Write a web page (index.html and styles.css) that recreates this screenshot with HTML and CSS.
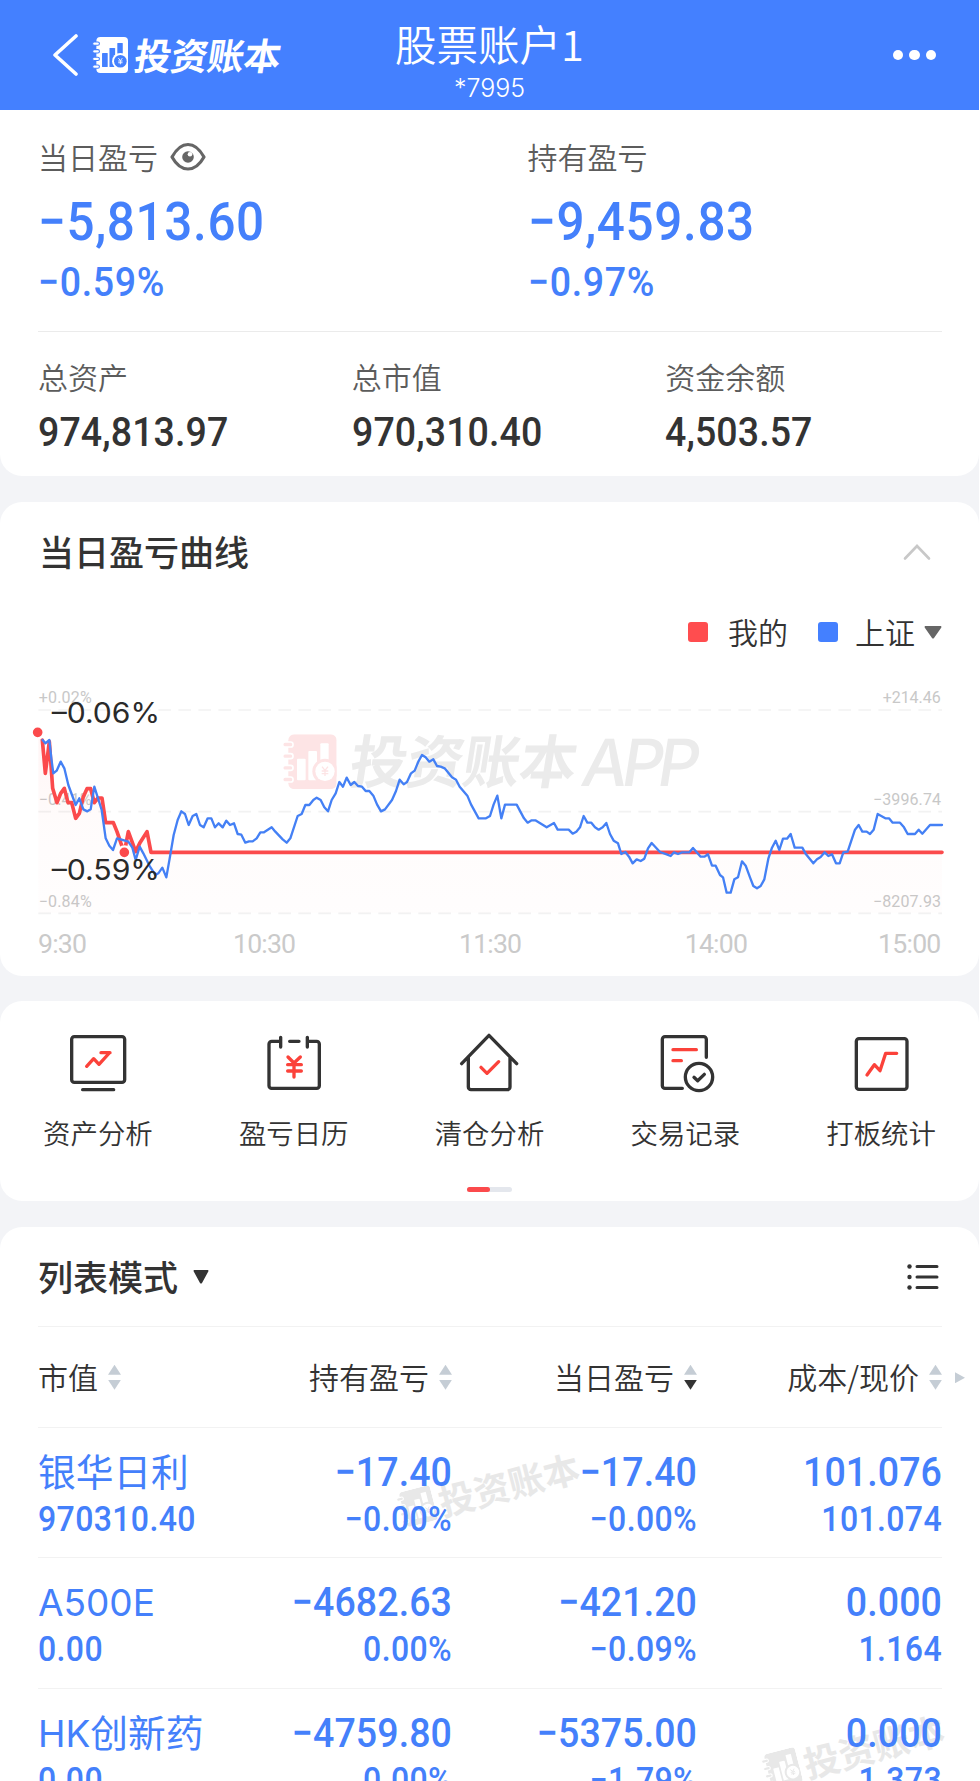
FILE: index.html
```html
<!DOCTYPE html>
<html lang="zh-CN">

<head>
    <meta charset="UTF-8">
    <meta name="viewport" content="width=device-width, initial-scale=1.0">
    <title>股票账户1</title>
    <link rel="stylesheet" href="styles.css">
</head>

<body>
    <!-- logo shared by the header and the watermarks -->
    <svg class="defs" width="0" height="0">
        <symbol id="logo" viewBox="0 0 165 165">
            <rect x="20" y="0" width="145" height="165" rx="18" fill="currentColor"/>
            <g class="logo-ring">
                <rect x="3" y="23" width="31" height="15" rx="7"/>
                <rect x="3" y="58" width="31" height="15" rx="7"/>
                <rect x="3" y="93" width="31" height="15" rx="7"/>
                <rect x="3" y="128" width="31" height="15" rx="7"/>
            </g>
            <g class="logo-hole">
                <rect x="46" y="73" width="26" height="65" rx="3"/>
                <rect x="80" y="50" width="26" height="88" rx="3"/>
                <rect x="116" y="27" width="25" height="80" rx="3"/>
                <circle cx="130" cy="111" r="38" fill="currentColor"/>
                <circle class="coin" cx="130" cy="111" r="29"/>
            </g>
            <path d="M121 97l9 11 9-11M130 108v17M120 110h20M120 118h20" fill="none" stroke="currentColor" stroke-width="4"/>
        </symbol>
    </svg>

    <div class="app">
        <header class="navbar">
            <div class="nav-left">
                <svg class="back" width="26" height="44" viewBox="0 0 26 44">
                    <path d="M24 3L3 22l21 19" fill="none" stroke="#fff" stroke-width="3.6" stroke-linecap="round" stroke-linejoin="round"/>
                </svg>
                <svg class="nav-logo" width="36" height="36"><use href="#logo"/></svg>
                <span class="brand">投资账本</span>
            </div>
            <div class="nav-title">
                <div class="account">股票账户1</div>
                <div class="account-no">*7995</div>
            </div>
            <div class="nav-more"><i></i><i></i><i></i></div>
        </header>

        <section class="card summary">
            <div class="profit">
                <div class="profit-col">
                    <div class="label">当日盈亏
                        <svg class="eye" width="36" height="30" viewBox="0 0 36 30">
                            <path d="M2 15C7 6 12 2.500 18 2.500S29 6 34 15C29 24 24 27 18 27S7 24 2 15Z" fill="none" stroke="#666" stroke-width="3.200" stroke-linejoin="round"/>
                            <circle cx="18" cy="15" r="5.800" fill="#666"/>
                            <circle cx="20" cy="12.200" r="2.300" fill="#fff"/>
                        </svg>
                    </div>
                    <div class="num big">−5,813.60</div>
                    <div class="num pct">−0.59%</div>
                </div>
                <div class="profit-col">
                    <div class="label">持有盈亏</div>
                    <div class="num big">−9,459.83</div>
                    <div class="num pct">−0.97%</div>
                </div>
            </div>
            <div class="assets">
                <div class="asset">
                    <div class="label">总资产</div>
                    <div class="num mid">974,813.97</div>
                </div>
                <div class="asset">
                    <div class="label">总市值</div>
                    <div class="num mid">970,310.40</div>
                </div>
                <div class="asset">
                    <div class="label">资金余额</div>
                    <div class="num mid">4,503.57</div>
                </div>
            </div>
        </section>

        <section class="card curve">
            <div class="card-head">
                <h2>当日盈亏曲线</h2>
                <svg class="fold" width="28" height="18" viewBox="0 0 28 18">
                    <path d="M2 15.500L14 3l12 12.500" fill="none" stroke="#c8c8c8" stroke-width="2.600" stroke-linecap="round"/>
                </svg>
            </div>
            <div class="legend">
                <i class="box red"></i><span class="mine">我的</span>
                <i class="box blue"></i><span>上证</span>
                <svg class="caret" width="18" height="13" viewBox="0 0 18 13"><path d="M1 0h16q1 1 0 2L10 12q-1 1-2 0L1 2q-1-1 0-2z" fill="#666"/></svg>
            </div>
            <!-- chart units are a third of a pixel -->
            <svg class="chart" width="979" height="296" viewBox="0 0 2937 888">
                <defs>
                    <linearGradient id="area" x1="0" y1="0" x2="0" y2="1">
                        <stop offset="0" stop-color="#ff4d4f" stop-opacity=".06"/>
                        <stop offset=".5" stop-color="#ff4d4f" stop-opacity=".02"/>
                        <stop offset="1" stop-color="#ff4d4f" stop-opacity=".01"/>
                    </linearGradient>
                </defs>
                <g class="wm-chart">
                    <svg class="wm-icon" x="845" y="163" width="165" height="165"><use href="#logo"/></svg>
                    <text transform="translate(1042 309) skewX(-9)" class="wm-cn" textLength="680">投资账本</text>
                    <text transform="translate(1738 317) skewX(-9)" class="wm-en" textLength="353">APP</text>
                </g>
                <g class="grid">
                    <path d="M115 90H2826M115 395H2826M115 700H2826"/>
                </g>
                <g class="axis">
                    <text x="116" y="69" textLength="159">+0.02%</text>
                    <text x="116" y="374" textLength="159">−0.41%</text>
                    <text x="116" y="680" textLength="159">−0.84%</text>
                    <text x="2648" y="69" textLength="174">+214.46</text>
                    <text x="2619" y="374" textLength="204">−3996.74</text>
                    <text x="2619" y="680" textLength="204">−8207.93</text>
                </g>
                <g class="times">
                    <text x="114" y="819" textLength="147">9:30</text>
                    <text x="699" y="819" textLength="189">10:30</text>
                    <text x="1377" y="819" textLength="189">11:30</text>
                    <text x="2054" y="819" textLength="190">14:00</text>
                    <text x="2634" y="819" textLength="190">15:00</text>
                </g>
                <path fill="url(#area)" d="M115 157L127 180 136 280 148 185 158 325 171 368 193 325 204 368 227 415 261 326 272 326 283 368 306 354 317 428 340 428 373 517 385 455 407 515 441 455 453 517H2826V700H115Z"/>
                <polyline class="mine-line" points="127,180 136,280 148,185 158,325 171,368 182,340 193,325 204,368 215,368 227,415 238,400 250,350 261,326 272,326 283,368 294,354 306,354 317,428 340,428 351,455 363,490 373,517 385,455 407,515 419,490 441,455 453,517 2826,517"/>
                <polyline class="index-line" points="128,180 136,190 148,180 154,235 160,280 170,272 182,245 193,265 205,315 227,375 238,355 250,388 262,394 272,388 283,320 305,390 317,475 328,497 339,510 351,475 362,478 385,485 397,503 407,540 419,500 430,520 450,560 466,585 475,580 487,563 499,592 510,530 521,465 533,420 544,394 555,402 566,435 578,408 589,402 600,435 611,442 623,415 634,415 645,442 656,430 668,442 679,422 690,435 702,430 713,462 724,464 736,488 747,484 758,484 770,475 781,457 792,457 815,442 826,455 848,478 860,488 871,475 893,408 905,402 916,375 928,375 940,360 950,353 962,360 973,382 984,394 995,360 1007,340 1018,306 1029,320 1040,293 1052,315 1063,306 1074,318 1086,320 1097,333 1108,333 1120,347 1131,373 1143,394 1155,388 1176,360 1188,333 1199,299 1211,313 1221,306 1233,280 1244,272 1255,245 1266,225 1277,232 1288,245 1300,238 1311,258 1322,260 1334,265 1356,292 1368,299 1379,320 1402,347 1413,373 1436,415 1458,415 1470,408 1481,373 1492,347 1504,415 1515,374 1550,374 1572,415 1583,428 1595,421 1606,421 1640,442 1662,429 1673,449 1706,449 1718,461 1729,455 1740,442 1751,408 1762,428 1774,428 1785,442 1796,449 1808,442 1819,429 1830,462 1841,482 1854,490 1864,522 1876,516 1887,530 1898,550 1910,538 1922,543 1933,536 1944,505 1955,489 1980,516 2000,523 2012,528 2022,517 2034,522 2046,517 2068,517 2079,504 2102,530 2113,530 2124,523 2136,557 2147,557 2160,585 2169,592 2180,638 2192,638 2203,598 2214,592 2226,544 2237,557 2250,592 2260,618 2271,625 2282,618 2293,598 2305,536 2316,503 2327,482 2338,510 2349,476 2361,476 2372,462 2384,503 2407,503 2418,523 2440,550 2451,538 2462,531 2474,517 2485,528 2496,523 2508,550 2519,550 2530,517 2543,515 2565,449 2576,435 2587,455 2600,455 2610,462 2621,449 2633,402 2656,415 2667,415 2678,428 2700,428 2712,442 2723,462 2745,462 2756,449 2767,461 2790,435 2826,435"/>
                <circle class="dot" cx="113" cy="157" r="18"/>
                <circle class="dot" cx="373" cy="517" r="18"/>
                <g class="tips">
                    <text x="155" y="129" textLength="325" lengthAdjust="spacingAndGlyphs">–0.06%</text>
                    <text x="155" y="601" textLength="325" lengthAdjust="spacingAndGlyphs">–0.59%</text>
                </g>
            </svg>
        </section>

        <section class="card menu">
            <div class="menu-list">
                <div class="menu-item">
                    <svg class="icon" viewBox="0 0 180 180">
                        <rect x="11" y="11" width="159" height="137" rx="8"/>
                        <path d="M44 170h93"/>
                        <path class="r" d="M56 100l21-23 16 17 31-34M99 59h27"/>
                    </svg>
                    <span>资产分析</span>
                </div>
                <div class="menu-item">
                    <svg class="icon" viewBox="0 0 180 180">
                        <path d="M50 25H23a8 8 0 0 0-8 8v125a8 8 0 0 0 8 8h135a8 8 0 0 0 8-8V33a8 8 0 0 0-8-8h-28M50 13v29M130 13v29M77 25h28"/>
                        <path class="r" d="M72 72l18 18 19-18M90 90v42M71 95h41M71 114h41"/>
                    </svg>
                    <span>盈亏日历</span>
                </div>
                <div class="menu-item">
                    <svg class="icon" viewBox="0 0 180 180">
                        <path d="M8 92L90 7l83 85M28 74v88a8 8 0 0 0 8 8h109a8 8 0 0 0 8-8V74"/>
                        <path class="r" d="M66 103l18 18 35-35"/>
                    </svg>
                    <span>清仓分析</span>
                </div>
                <div class="menu-item">
                    <svg class="icon" viewBox="0 0 180 180">
                        <path d="M154 73V19a8 8 0 0 0-8-8H30a8 8 0 0 0-8 8v139a8 8 0 0 0 8 8h52"/>
                        <circle cx="132" cy="132" r="41"/>
                        <path d="M117 133l11 10 20-19"/>
                        <path class="r" d="M54 50h70M54 83h25"/>
                    </svg>
                    <span>交易记录</span>
                </div>
                <div class="menu-item">
                    <svg class="icon" viewBox="0 0 180 180">
                        <rect x="16" y="17" width="152" height="152" rx="8"/>
                        <path class="r" d="M48 126l22-31 17 18 17-52h33"/>
                    </svg>
                    <span>打板统计</span>
                </div>
            </div>
            <div class="pager"><i></i></div>
        </section>

        <section class="card holdings">
            <div class="mode">
                <h2>列表模式</h2>
                <svg class="mode-caret" width="16" height="14" viewBox="0 0 16 14"><path d="M1 0h14q1 1 0 2L9 13q-1 1-2 0L1 2q-1-1 0-2z" fill="#333"/></svg>
                <svg class="list-icon" width="32" height="26" viewBox="0 0 32 26">
                    <path d="M10 2.500h20M10 13h20M10 23.500h20" stroke="#333" stroke-width="3" stroke-linecap="round"/>
                    <circle cx="2.500" cy="2.500" r="2.200" fill="#333"/>
                    <circle cx="2.500" cy="13" r="2.200" fill="#333"/>
                    <circle cx="2.500" cy="23.500" r="2.200" fill="#333"/>
                </svg>
            </div>
            <div class="row thead">
                <div><span>市值</span><i class="sort"></i></div>
                <div><span>持有盈亏</span><i class="sort"></i></div>
                <div><span>当日盈亏</span><i class="sort down"></i></div>
                <div><span>成本/现价</span><i class="sort"></i><i class="next"></i></div>
            </div>
            <div class="row">
                <div><b class="name">银华日利</b><span class="num sub">970310.40</span></div>
                <div><span class="num val">−17.40</span><span class="num sub">−0.00%</span></div>
                <div><span class="num val">−17.40</span><span class="num sub">−0.00%</span></div>
                <div><span class="num val">101.076</span><span class="num sub">101.074</span></div>
            </div>
            <div class="row">
                <div><b class="name"><span class="latin">A500E</span></b><span class="num sub">0.00</span></div>
                <div><span class="num val">−4682.63</span><span class="num sub">0.00%</span></div>
                <div><span class="num val">−421.20</span><span class="num sub">−0.09%</span></div>
                <div><span class="num val">0.000</span><span class="num sub">1.164</span></div>
            </div>
            <div class="row">
                <div><b class="name"><span class="latin">HK</span>创新药</b><span class="num sub">0.00</span></div>
                <div><span class="num val">−4759.80</span><span class="num sub">0.00%</span></div>
                <div><span class="num val">−5375.00</span><span class="num sub">−1.79%</span></div>
                <div><span class="num val">0.000</span><span class="num sub">1.373</span></div>
            </div>
            <div class="watermark wm-1"><svg width="36" height="36"><use href="#logo"/></svg><span>投资账本</span></div>
            <div class="watermark wm-2"><svg width="36" height="36"><use href="#logo"/></svg><span>投资账本</span></div>
        </section>
    </div>
</body>

</html>
```
FILE: styles.css
```css
* {
    box-sizing: border-box;
}

body {
    margin: 0;
    background-color: #fff;
    font-family: "Noto Sans CJK SC", sans-serif;
    color: #333;
}

svg {
    display: block;
}

.defs {
    position: absolute;
}

.app {
    width: 979px;
    height: 1781px;
    overflow: hidden;
    background-color: #f3f4f7;
    display: flex;
    flex-direction: column;
    gap: 26px;
}

.logo-ring {
    fill: currentColor;
    stroke: var(--hole);
    stroke-width: 5;
}

.logo-hole rect,
.coin {
    fill: var(--hole);
}

/* header */
.navbar {
    height: 110px;
    flex-shrink: 0;
    margin-bottom: -26px;
    padding: 0 43px 0 52px;
    background-color: #4480ff;
    color: #fff;
    display: grid;
    grid-template-columns: 1fr auto 1fr;
    --hole: #4480ff;
}

.nav-left {
    display: flex;
    align-items: center;
}

.nav-logo {
    margin-left: 14px;
}

.brand {
    margin-left: 7px;
    margin-top: -3px;
    font-size: 37px;
    font-weight: 700;
    line-height: 40px;
    letter-spacing: -0.5px;
    transform: skewX(-9deg);
}

.nav-title {
    text-align: center;
    margin-right: 9px;
}

.account {
    margin-top: 18px;
    font-size: 41.5px;
    font-weight: 350;
    line-height: 50px;
}

.account-no {
    margin-top: 6px;
    font-family: Inter, sans-serif;
    font-size: 25px;
    font-weight: 300;
    line-height: 28px;
}

.nav-more {
    display: flex;
    align-items: center;
    justify-content: flex-end;
    gap: 6px;
}

.nav-more i {
    width: 10.5px;
    height: 10.5px;
    border-radius: 50%;
    background-color: #fff;
}

.card {
    position: relative;
    flex-shrink: 0;
    background-color: #fff;
    border-radius: 22px;
}

/* narrow digits */
.num {
    font-family: Roboto, sans-serif;
    font-weight: 500;
    color: #4480fb;
    transform: scaleX(0.915);
    transform-origin: left;
}

.label {
    display: flex;
    align-items: center;
    font-size: 30px;
    font-weight: 350;
    line-height: 40px;
    margin-top: -2px;
    color: #5c5c5c;
}

.eye {
    margin-left: 12px;
    margin-top: 2px;
}

h2 {
    margin: 0;
    font-size: 35px;
    font-weight: 500;
    line-height: 44px;
}

/* summary */
.summary {
    height: 366px;
    padding-left: 38px;
    border-radius: 0 0 22px 22px;
}

.profit {
    width: 904px;
    height: 222px;
    padding-top: 28px;
    border-bottom: 1px solid #ebebeb;
    display: flex;
}

.profit-col {
    width: 489.5px;
    flex-shrink: 0;
}

.big {
    margin-top: 15px;
    font-size: 54px;
    line-height: 62px;
    letter-spacing: 0.7px;
}

.pct {
    margin-top: 4px;
    font-size: 41px;
    line-height: 50px;
    letter-spacing: 0.7px;
}

.assets {
    display: flex;
    padding-top: 26px;
}

.asset {
    width: 313.7px;
}

.mid {
    margin-top: 11px;
    color: #333;
    font-size: 41px;
    line-height: 50px;
    letter-spacing: 0.1px;
}

/* curve */
.curve {
    height: 474px;
}

.card-head {
    height: 104px;
    padding: 0 48px 4px 39px;
    display: flex;
    align-items: center;
    justify-content: space-between;
}

.card-head h2 {
    margin-top: -2px;
}

.legend {
    height: 54px;
    padding-right: 37px;
    display: flex;
    align-items: center;
    justify-content: flex-end;
    font-size: 30px;
    font-weight: 350;
    line-height: 40px;
}

.legend span {
    margin-top: -5px;
}

.box {
    width: 20px;
    height: 20px;
    border-radius: 3px;
    margin-right: 20px;
    margin-top: -2px;
}

.blue {
    margin-right: 17px;
    background-color: #4480ff;
}

.red {
    background-color: #ff4d4f;
}

.mine {
    margin-right: 30px;
}

.caret {
    margin-left: 9px;
    margin-top: -2px;
}

.chart {
    margin-top: 20px;
}

.grid path {
    stroke: #f2f2f2;
    stroke-width: 5;
    stroke-dasharray: 38 22;
}

.axis text {
    font: 400 48px Roboto, sans-serif;
    fill: #c8c8c8;
}

.times text {
    font: 450 80px Roboto, sans-serif;
    fill: #cacaca;
}

.tips text {
    font: 400 85px Inter, sans-serif;
    fill: #2a2a2a;
}

.mine-line {
    fill: none;
    stroke: #fb4a4c;
    stroke-width: 11;
    stroke-linejoin: round;
    stroke-linecap: round;
}

.index-line {
    fill: none;
    stroke: #4480f5;
    stroke-width: 7;
    stroke-linejoin: round;
    stroke-linecap: round;
}

.dot {
    fill: #fb4a4c;
    stroke: #fff;
    stroke-width: 7;
}

.wm-icon {
    color: #fde4e5;
    --hole: #fff;
}

.wm-cn {
    font-size: 172px;
    font-weight: 700;
    fill: #ebebeb;
}

.wm-en {
    font: 500 195px Inter, sans-serif;
    fill: #ebebeb;
}

/* menu */
.menu {
    height: 200px;
    padding-top: 32px;
    margin-top: -1px;
}

.menu-list {
    display: grid;
    grid-template-columns: repeat(5, 1fr);
}

.menu-item {
    display: flex;
    flex-direction: column;
    align-items: center;
    font-size: 27.4px;
    font-weight: 350;
    line-height: 40px;
}

.menu-item span {
    margin-top: 19px;
}

.icon {
    width: 60px;
    height: 60px;
    fill: none;
    stroke: #333;
    stroke-width: 10;
    stroke-linecap: round;
    stroke-linejoin: round;
}

.icon .r {
    stroke: #fb423a;
}

.pager {
    width: 45px;
    height: 5px;
    margin: 35px auto 0;
    border-radius: 3px;
    background-color: #e4e7ed;
}

.pager i {
    display: block;
    width: 23px;
    height: 5px;
    border-radius: 3px;
    background-color: #fb4a4c;
}

/* holdings */
.holdings {
    height: 600px;
    padding: 0 37px 0 38px;
    z-index: 0;
}

.mode {
    height: 100px;
    display: flex;
    align-items: center;
    border-bottom: 1px solid #f2f2f2;
}

.mode h2 {
    margin-top: -2px;
}

.mode-caret {
    margin-left: 15px;
}

.list-icon {
    margin-left: auto;
    margin-right: 3px;
}

.row {
    height: 130.7px;
    padding-top: 19px;
    display: grid;
    grid-template-columns: 169px 245px 245px 245px;
    border-bottom: 1px solid #f2f2f2;
    text-align: right;
}

.row > div:first-child {
    text-align: left;
}

.row .num {
    transform-origin: right;
}

.row > div:first-child .num {
    transform-origin: left;
}

.thead {
    height: 100.5px;
    padding-top: 0;
    font-size: 30px;
    font-weight: 350;
}

.thead > div {
    position: relative;
    display: flex;
    align-items: center;
    justify-content: flex-end;
}

.thead > div:first-child {
    justify-content: flex-start;
}

.thead span {
    margin-top: -2px;
}

.sort {
    width: 13px;
    height: 25px;
    margin-left: 10px;
    margin-top: 1px;
    display: flex;
    flex-direction: column;
    justify-content: space-between;
}

.sort::before,
.sort::after {
    content: "";
    height: 10px;
    background-color: #c5cdd5;
    clip-path: polygon(50% 0, 100% 100%, 0 100%);
}

.sort::after {
    clip-path: polygon(0 0, 100% 0, 50% 100%);
}

.down::after {
    background-color: #333;
}

/* hint that the table scrolls sideways */
.next {
    position: absolute;
    right: -23px;
    width: 10px;
    height: 11px;
    margin-top: 2px;
    background-color: #c5cdd5;
    clip-path: polygon(0 0, 100% 50%, 0 100%);
}

.name,
.val,
.sub {
    display: block;
    white-space: nowrap;
}

.name {
    height: 50px;
    font-size: 37.7px;
    font-weight: 400;
    line-height: 46px;
    color: #4480fb;
}

.latin {
    font-family: Inter, sans-serif;
    font-size: 37px;
}

.val {
    height: 50px;
    font-size: 41px;
    line-height: 50px;
    letter-spacing: 0.1px;
}

.sub {
    margin-top: 3px;
    font-size: 35px;
    line-height: 40px;
    letter-spacing: 0.4px;
}

.watermark {
    position: absolute;
    z-index: -1;
    display: flex;
    align-items: center;
    gap: 5px;
    color: #e8e8e8;
    font-size: 36px;
    font-weight: 700;
    line-height: 40px;
    transform: rotate(-14.5deg);
    --hole: #fff;
}

.wm-1 {
    left: 396px;
    top: 241px;
}

.wm-2 {
    left: 761px;
    top: 503px;
}
```
